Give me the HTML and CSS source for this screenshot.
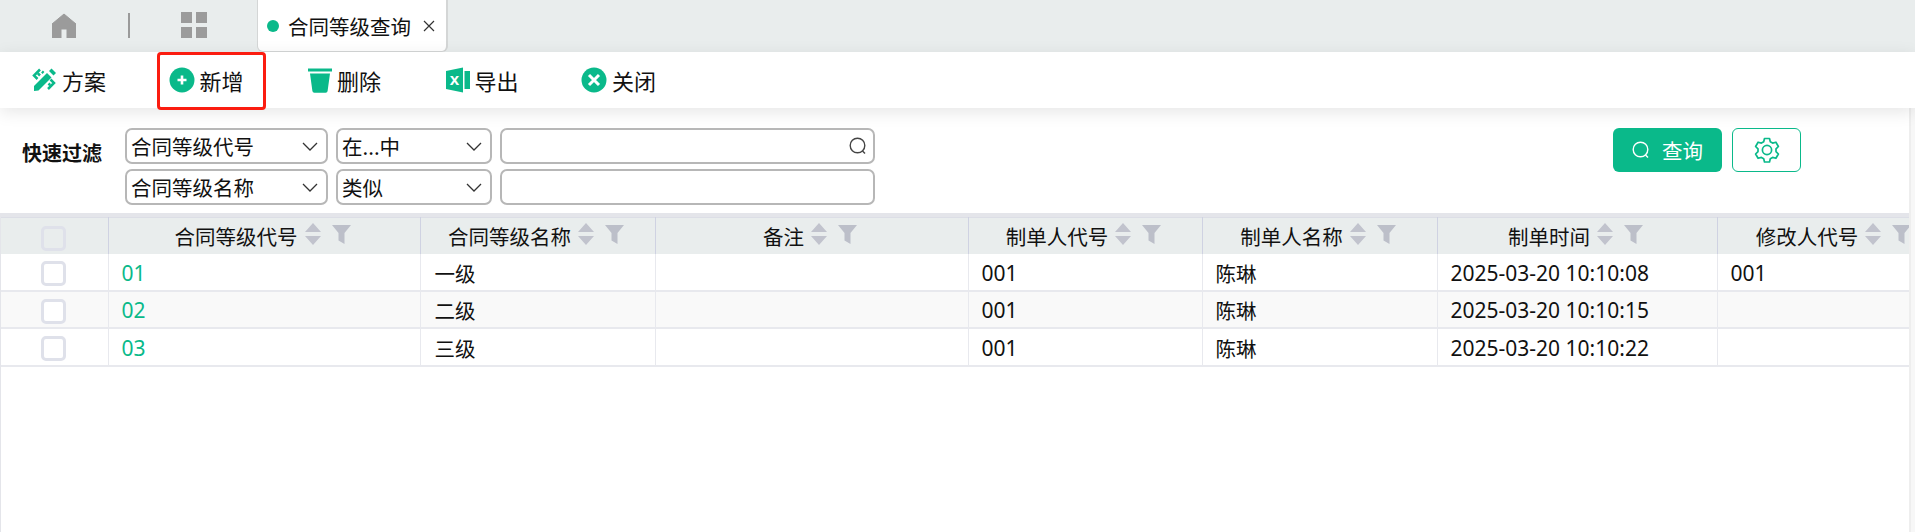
FILE: index.html
```html
<!DOCTYPE html>
<html lang="zh">
<head>
<meta charset="utf-8">
<title>合同等级查询</title>
<link rel="stylesheet" href="styles.css">
</head>
<body>
<div class="tabbar">
  <div class="tab-home">
    <svg class="ic-home" viewBox="0 0 24 24" width="24" height="26"><path d="M12 1 L24 11 V25 H15 V16 H9 V25 H0 V11 Z" fill="#9b9b9b" stroke="#9b9b9b" stroke-linejoin="round" stroke-width="1"/></svg>
  </div>
  <div class="tab-sep"></div>
  <div class="tab-grid">
    <svg viewBox="0 0 26 26" width="26" height="26"><path d="M0 0h11v11H0zM15 0h11v11H15zM0 15h11v11H0zM15 15h11v11H15z" fill="#9b9b9b"/></svg>
  </div>
  <div class="tab-active">
    <span class="tab-dot"></span>
    <span class="tab-title">合同等级查询</span>
    <svg class="tab-x" viewBox="0 0 12 12" width="12" height="12"><path d="M1 1l10 10M11 1L1 11" stroke="#333" stroke-width="1.2" fill="none"/></svg>
  </div>
</div>

<div class="toolbar">
  <div class="tool">
    <svg viewBox="0 0 26 26" width="26" height="26"><path d="M3 19 L16 6 L20.500 10.500 L7.500 23.500 L3 24 Z" fill="#0ab98a"/><path d="M18 4l2.500-2.500 4.500 4.500-2.500 2.500z" fill="#0ab98a"/><path d="M9 2.500l-6 6 3.500 3.500M7 6.500l2 2M11 4.500l1.500 1.500M17 22l6-6-3.500-3.500M19 18l-1.500-1.500" fill="none" stroke="#0ab98a" stroke-width="2.500"/></svg>
    <span>方案</span>
  </div>
  <div class="tool">
    <svg viewBox="0 0 26 26" width="26" height="26"><circle cx="13" cy="13" r="12.500" fill="#0ab98a"/><path d="M13 8.500v9M8.500 13h9" stroke="#fff" stroke-width="2.600"/></svg>
    <span>新增</span>
  </div>
  <div class="tool">
    <svg class="ic-narrow" viewBox="0 0 24 26" width="24" height="26"><path d="M0 1.500h24v3H0z" fill="#0ab98a"/><path d="M2 6.500h20l-2.400 17.500a2 2 0 0 1-2 1.800H6.400a2 2 0 0 1-2-1.800z" fill="#0ab98a"/></svg>
    <span>删除</span>
  </div>
  <div class="tool">
    <svg class="ic-narrow" viewBox="0 0 24 26" width="24" height="26"><path d="M0 4 L17 0.500 V25.500 L0 22 Z" fill="#0ab98a"/><path d="M18.500 4H24V22H18.500z" fill="#0ab98a"/><text x="8.500" y="18" class="xl-mark">x</text></svg>
    <span>导出</span>
  </div>
  <div class="tool">
    <svg viewBox="0 0 26 26" width="26" height="26"><circle cx="13" cy="13" r="12.500" fill="#0ab98a"/><path d="M8 8l10 10M18 8L8 18" stroke="#fff" stroke-width="3"/></svg>
    <span>关闭</span>
  </div>
  <div class="mark"></div>
</div>

<div class="content">
<div class="filter">
  <div class="filter-label">快速过滤</div>
  <div class="filter-grid">
    <div class="sel w-field">合同等级代号<svg class="chev" viewBox="0 0 16 9" width="16" height="9"><path d="M1 1l7 7 7-7" fill="none" stroke="#333" stroke-width="1.300"/></svg></div>
    <div class="sel w-op">在...中<svg class="chev" viewBox="0 0 16 9" width="16" height="9"><path d="M1 1l7 7 7-7" fill="none" stroke="#333" stroke-width="1.300"/></svg></div>
    <div class="sel w-val"><svg class="lens" viewBox="0 0 18 18" width="18" height="18"><circle cx="8.500" cy="8.500" r="7.300" fill="none" stroke="#444" stroke-width="1.400"/><path d="M13.500 14l2.500 2.500" stroke="#444" stroke-width="1.400"/></svg></div>
    <div class="sel w-field">合同等级名称<svg class="chev" viewBox="0 0 16 9" width="16" height="9"><path d="M1 1l7 7 7-7" fill="none" stroke="#333" stroke-width="1.300"/></svg></div>
    <div class="sel w-op">类似<svg class="chev" viewBox="0 0 16 9" width="16" height="9"><path d="M1 1l7 7 7-7" fill="none" stroke="#333" stroke-width="1.300"/></svg></div>
    <div class="sel w-val"></div>
  </div>
  <div class="filter-actions">
    <div class="btn-query">
      <svg viewBox="0 0 18 18" width="18" height="18"><circle cx="8.500" cy="8.500" r="7.300" fill="none" stroke="#fff" stroke-width="1.400"/><path d="M13.500 14l2.500 2.500" stroke="#fff" stroke-width="1.400"/></svg>
      <span>查询</span>
    </div>
    <div class="btn-gear">
      <svg viewBox="0 0 26 26" width="26" height="26"><path d="M10.500 1.500h5l.8 3.300 2.300 1.300 3.300-.9 2.500 4.300-2.400 2.400v2.700l2.400 2.400-2.500 4.300-3.300-.9-2.300 1.300-.8 3.300h-5l-.8-3.300-2.300-1.300-3.300.9-2.500-4.300 2.400-2.400v-2.700L1.600 9.500l2.500-4.300 3.300.9 2.300-1.300z" fill="none" stroke="#0ab98a" stroke-width="1.700" stroke-linejoin="round"/><circle cx="13" cy="13" r="4.600" fill="none" stroke="#0ab98a" stroke-width="1.700"/></svg>
    </div>
  </div>
</div>

<div class="grid-wrap">
  <table class="grid">
    <colgroup>
      <col class="c0"><col class="c1"><col class="c2"><col class="c3"><col class="c4"><col class="c5"><col class="c6"><col class="c7">
    </colgroup>
    <thead>
      <tr>
        <th class="th-chk"><span class="chk chk-h"></span></th>
        <th><div class="th-in">合同等级代号<svg class="sort" viewBox="0 0 16 22" width="16" height="22"><path d="M8 0l8 9H0zM0 13h16l-8 9z" fill="#c1c3cd"/></svg><svg class="funnel" viewBox="0 0 19 19" width="19" height="19"><path d="M0 0h19l-6.500 8V19l-6-3.500V8z" fill="#bcbfc9"/></svg></div></th>
        <th><div class="th-in">合同等级名称<svg class="sort" viewBox="0 0 16 22" width="16" height="22"><path d="M8 0l8 9H0zM0 13h16l-8 9z" fill="#c1c3cd"/></svg><svg class="funnel" viewBox="0 0 19 19" width="19" height="19"><path d="M0 0h19l-6.500 8V19l-6-3.500V8z" fill="#bcbfc9"/></svg></div></th>
        <th><div class="th-in">备注<svg class="sort" viewBox="0 0 16 22" width="16" height="22"><path d="M8 0l8 9H0zM0 13h16l-8 9z" fill="#c1c3cd"/></svg><svg class="funnel" viewBox="0 0 19 19" width="19" height="19"><path d="M0 0h19l-6.500 8V19l-6-3.500V8z" fill="#bcbfc9"/></svg></div></th>
        <th><div class="th-in">制单人代号<svg class="sort" viewBox="0 0 16 22" width="16" height="22"><path d="M8 0l8 9H0zM0 13h16l-8 9z" fill="#c1c3cd"/></svg><svg class="funnel" viewBox="0 0 19 19" width="19" height="19"><path d="M0 0h19l-6.500 8V19l-6-3.500V8z" fill="#bcbfc9"/></svg></div></th>
        <th><div class="th-in">制单人名称<svg class="sort" viewBox="0 0 16 22" width="16" height="22"><path d="M8 0l8 9H0zM0 13h16l-8 9z" fill="#c1c3cd"/></svg><svg class="funnel" viewBox="0 0 19 19" width="19" height="19"><path d="M0 0h19l-6.500 8V19l-6-3.500V8z" fill="#bcbfc9"/></svg></div></th>
        <th><div class="th-in">制单时间<svg class="sort" viewBox="0 0 16 22" width="16" height="22"><path d="M8 0l8 9H0zM0 13h16l-8 9z" fill="#c1c3cd"/></svg><svg class="funnel" viewBox="0 0 19 19" width="19" height="19"><path d="M0 0h19l-6.500 8V19l-6-3.500V8z" fill="#bcbfc9"/></svg></div></th>
        <th><div class="th-in">修改人代号<svg class="sort" viewBox="0 0 16 22" width="16" height="22"><path d="M8 0l8 9H0zM0 13h16l-8 9z" fill="#c1c3cd"/></svg><svg class="funnel" viewBox="0 0 19 19" width="19" height="19"><path d="M0 0h19l-6.500 8V19l-6-3.500V8z" fill="#bcbfc9"/></svg></div></th>
      </tr>
    </thead>
    <tbody>
      <tr><td><span class="chk"></span></td><td class="code num">01</td><td class="lv">一级</td><td></td><td class="num">001</td><td>陈琳</td><td class="num">2025-03-20 10:10:08</td><td class="num">001</td></tr>
      <tr class="alt"><td><span class="chk"></span></td><td class="code num">02</td><td class="lv">二级</td><td></td><td class="num">001</td><td>陈琳</td><td class="num">2025-03-20 10:10:15</td><td></td></tr>
      <tr><td><span class="chk"></span></td><td class="code num">03</td><td class="lv">三级</td><td></td><td class="num">001</td><td>陈琳</td><td class="num">2025-03-20 10:10:22</td><td></td></tr>
    </tbody>
  </table>
</div>
</div>
</body>
</html>
```
FILE: styles.css
```css
* { box-sizing: border-box; }
html, body { margin: 0; padding: 0; height: 100%; overflow: hidden; background: #f7f7f7; }
body { font-family: "Noto Sans CJK SC", "Noto Sans", sans-serif; font-size: 20.500px; color: #111; display: flex; flex-direction: column; }

.tabbar { height: 52px; flex: none; background: #e9eded; display: flex; align-items: flex-start; }
.tab-home { width: 52px; margin-left: 52px; padding-top: 12px; }
.ic-home { display: block; }
.tab-sep { width: 2px; height: 25px; margin: 13px 0 0 24px; background: #9a9a9a; }
.tab-grid { margin: 12px 0 0 51px; height: 26px; }
.tab-grid svg { display: block; }
.tab-active {
  margin-left: 50px; width: 191px; height: 52px; background: #fff;
  border-radius: 0 0 6px 6px; border: 1px solid #d4d6d6; border-top: 0;
  border-width: 0 2px 1px 1px;
  display: flex; align-items: center; padding-left: 9px;
}
.tab-dot { width: 12px; height: 12px; border-radius: 50%; background: #0ab98a; flex: none; }
.tab-title { margin-left: 9px; line-height: 26px; white-space: nowrap; }
.tab-x { margin-left: 12px; flex: none; }

.toolbar {
  height: 56px; flex: none; background: #fff; position: relative; z-index: 1;
  display: flex; align-items: center; gap: 62.500px; padding-left: 31px;
  box-shadow: 0 4px 16px rgba(0, 0, 0, .1);
}
.tool { display: flex; align-items: center; gap: 5px; font-size: 22px; width: 75px; flex: none; }
.tool span { line-height: 28px; white-space: nowrap; }
.tool svg { flex: none; }
.tool .ic-narrow { margin-left: 2px; }
.xl-mark { font: bold 17px "Liberation Sans", sans-serif; fill: #fff; text-anchor: middle; }
.mark {
  position: absolute; left: 157px; top: 0; width: 109px; height: 58px;
  border: 3px solid #fb1c10; border-radius: 4px;
}

.content {
  flex: 1; width: 1911px; min-height: 0; background: #fff; border-right: 2px solid #eee;
  display: flex; flex-direction: column;
}
.filter { height: 105px; flex: none; background: #fff; display: flex; align-items: flex-start; padding-top: 20px; }
.filter-label { width: 125px; padding: 13px 0 0 22px; font-weight: 700; line-height: 24px; white-space: nowrap; font-size: 20px; }
.filter-grid { display: grid; grid-template-columns: 203px 156px 375px; gap: 5px 8px; }
.sel {
  height: 36px; border: 2px solid #b7b7b7; border-radius: 7px; background: #fff;
  display: flex; align-items: center; justify-content: space-between;
  padding: 0 8px 0 4px; line-height: 30px; white-space: nowrap;
}
.sel .lens { margin-left: auto; margin-right: -2px; }
.filter-actions { display: flex; gap: 10px; margin-left: 738px; }
.btn-query {
  width: 109px; height: 44px; border-radius: 6px; background: #0ab98a; color: #fff;
  display: flex; align-items: center; justify-content: center; gap: 12px;
}
.btn-gear {
  width: 69px; height: 44px; border-radius: 6px; border: 1px solid #0ab98a; background: #fff;
  display: flex; align-items: center; justify-content: center;
}

.grid-wrap {
  flex: 1; min-height: 0; overflow: hidden; border-top: 4px solid #e4e5ea; border-left: 1px solid #e4e5ea;
}
.grid { table-layout: fixed; border-collapse: collapse; width: 1952px; }
.c0 { width: 107px; }
.c1 { width: 312px; }
.c2 { width: 235px; }
.c3 { width: 313px; }
.c4 { width: 234px; }
.c5 { width: 235px; }
.c6 { width: 280px; }
.c7 { width: 236px; }
.grid th {
  height: 36px; padding: 0; font-weight: 400; background: #e9eded; overflow: hidden;
  border-right: 1px solid #cfd2e2; border-top: 1px solid #dcdee6;
}
.grid th.th-chk { padding-right: 2px; }
.grid td {
  height: 37px; padding: 2px 0 0 13px; border-right: 1px solid #e8e9ee; border-bottom: 2px solid #e8e9ee;
  line-height: 28px; white-space: nowrap; background: #fff;
}
.grid tr:nth-child(3) td { height: 38px; }
.grid tr.alt td { background: #f9f9f9; }
.grid td:first-child { padding: 0 2px 0 0; text-align: center; }
.grid td.lv { padding-left: 14px; }
.grid td.num { font-family: "Noto Sans", sans-serif; font-size: 21px; }
.grid td.code { color: #0ab98a; }
.th-in { display: flex; align-items: center; justify-content: center; gap: 7px; padding-right: 3px; line-height: 30px; white-space: nowrap; }
.sort { flex: none; margin-top: -4px; }
.funnel { flex: none; margin-left: 4px; margin-top: -3px; }
.chk {
  display: inline-block; width: 25px; height: 25px; border: 3px solid #dfe1ea; border-radius: 5px;
  vertical-align: middle; background: #fff;
}
.chk-h { background: #e9eded; }
```
